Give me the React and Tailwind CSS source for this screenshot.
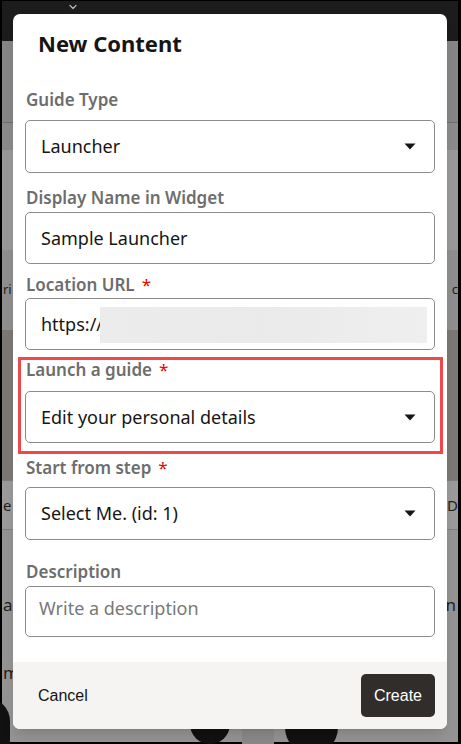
import { ChevronDown } from 'lucide-react';

const sans = { fontFamily: '"Noto Sans", "Open Sans", sans-serif' };
const arial = { fontFamily: '"Liberation Sans", Arial, sans-serif' };

function Caret() {
  return (
    <svg width="12" height="7" viewBox="0 0 12 7" className="shrink-0">
      <path d="M0.5 0.5 L11.5 0.5 L6 6.5 Z" fill="#161513" />
    </svg>
  );
}

function Label({ children, required, className = '' }) {
  return (
    <div className={`pl-[1px] text-[17px] leading-[24px] font-semibold text-[#6d6d6d] ${className}`}>
      {children}
      {required && <span className="ml-[7px] font-normal text-[#ee0000]">*</span>}
    </div>
  );
}

function SelectBox({ value, className = '' }) {
  return (
    <div className={`flex items-center justify-between rounded-[5px] border border-[#8c8c8c] pl-[15px] pr-[18px] text-[18px] text-[#161513] ${className}`}>
      <span>{value}</span>
      <Caret />
    </div>
  );
}

export default function App() {
  return (
    <div className="relative h-[744px] w-[461px] overflow-hidden bg-black pt-[1px] pl-[2px] pr-[3px] pb-[2px]" style={sans}>
      {/* dimmed page behind the dialog */}
      <div className="flex h-full flex-col">
        <div className="h-[40px] bg-[#1c1c1c] pl-[65px]">
          <ChevronDown size={12} strokeWidth={2.5} className="text-[#b5b5b5]" />
        </div>
        <div className="h-[81px] bg-[#868686]" />
        <div className="h-[1px] bg-[#6e6e6e]" />
        <div className="h-[27px] bg-[#8b8b8b]" />
        <div className="h-[100px] bg-[#999999]" />
        <div className="flex h-[80px] items-center justify-between bg-[#8f8f8f] pl-[1px] text-[13px] text-[#1e1e1e]">
          <span>ri</span>
          <span>c</span>
        </div>
        <div className="h-[150px] bg-[#7b7876]" />
        <div className="flex h-[50px] items-center justify-between border-y border-[#7f7f7f] bg-[#9b9b9b] pl-[1px] text-[15px] text-[#1e1e1e]">
          <span>e</span>
          <span>D</span>
        </div>
        <div className="relative flex-1 bg-[#949494] text-[17px] text-[#1e1e1e]">
          <div className="flex justify-between pl-[1px] pr-[2px] pt-[62px]">
            <span>al</span>
            <span>n</span>
          </div>
          <div className="pl-[1px] pt-[42px]">m</div>
          <div className="absolute bottom-[-20px] left-[-38px] h-[64px] w-[46px] rounded-full bg-[#111]" />
          <div className="absolute bottom-[-2px] left-[188px] h-[44px] w-[40px] rounded-full bg-[#111]" />
          <div className="absolute bottom-[-2px] left-[240px] h-[20px] w-[32px] bg-[#8a8a8a]" />
          <div className="absolute bottom-[-12px] left-[283px] h-[54px] w-[53px] rounded-full bg-[#111]" />
        </div>
      </div>

      {/* dialog */}
      <div className="absolute left-[13px] top-[14px] flex h-[715px] w-[434px] flex-col overflow-hidden rounded-[7px] bg-white shadow-lg">
        <div className="px-[12px] pt-[14px]">
          <h2 className="pl-[13px] text-[22px] leading-[30px] font-bold text-[#161513]">New Content</h2>

          <div className="mt-[30px]">
            <Label className="mb-[8px]">Guide Type</Label>
            <SelectBox value="Launcher" className="h-[53px]" />
          </div>

          <div className="mt-[13px]">
            <Label className="mb-[2px]">Display Name in Widget</Label>
            <div className="flex h-[52px] items-center rounded-[5px] border border-[#8c8c8c] pl-[15px] text-[18px] text-[#161513]">
              Sample Launcher
            </div>
          </div>

          <div className="mt-[9px]">
            <Label required className="mb-[1px]">Location URL</Label>
            <div className="flex h-[52px] items-center rounded-[5px] border border-[#8c8c8c] pl-[15px] pr-[7px] text-[18px] text-[#161513]">
              <span>https://</span>
              <div className="mt-[2px] h-[36px] flex-1 -ml-[3px] bg-gradient-to-r from-[#ececec] via-[#eaeaea] to-[#efefef]" />
            </div>
          </div>

          <div className="relative mt-[8px]">
            <Label required className="mb-[9px]">Launch a guide</Label>
            <SelectBox value="Edit your personal details" className="h-[52px]" />
            <div className="pointer-events-none absolute -top-[1px] -bottom-[11px] -left-[7px] -right-[8px] border-[3px] border-[#f04848]" />
          </div>

          <div className="mt-[13px]">
            <Label required className="mb-[7px]">Start from step</Label>
            <SelectBox value="Select Me. (id: 1)" className="h-[53px]" />
          </div>

          <div className="mt-[20px]">
            <Label className="mb-[2px]">Description</Label>
            <textarea
              rows={1}
              readOnly
              placeholder="Write a description"
              className="block h-[51px] w-full resize-none rounded-[5px] border border-[#8c8c8c] pl-[13px] pt-[9px] text-[18px] leading-[24px] text-[#161513] outline-none placeholder:text-[#787878]"
              style={sans}
            />
          </div>
        </div>

        <div className="mt-auto flex h-[67px] items-center justify-between bg-[#f5f4f2] pl-[25px] pr-[12px]" style={arial}>
          <button className="text-[16px] text-[#161513]">Cancel</button>
          <button className="h-[43px] rounded-[5px] bg-[#312d2a] px-[13px] text-[16px] text-white">Create</button>
        </div>
      </div>
    </div>
  );
}
